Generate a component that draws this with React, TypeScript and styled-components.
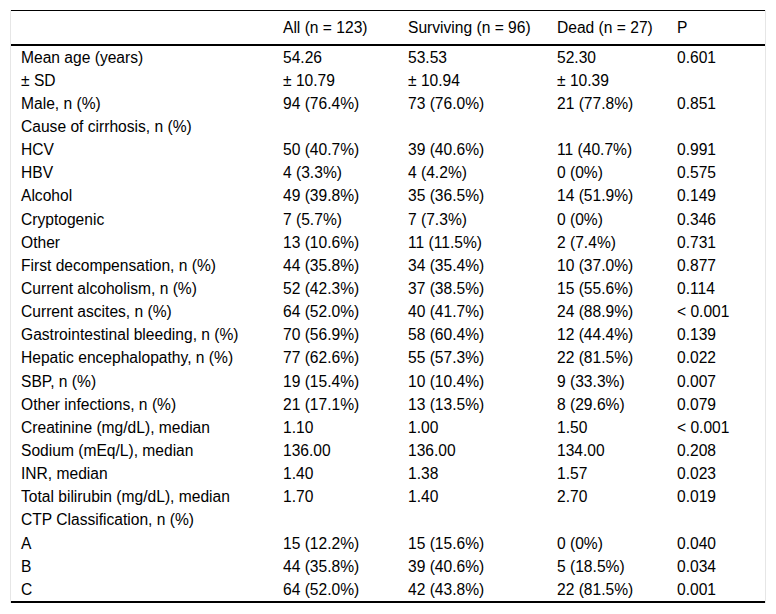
import { FC } from "react";
import styled, { createGlobalStyle } from "styled-components";

const GlobalStyle = createGlobalStyle`
  html, body {
    margin: 0;
    padding: 0;
    background: #ffffff;
  }
  body {
    font-family: "Liberation Sans", Arial, sans-serif;
    color: #000000;
  }
`;

const Page = styled.div`
  padding: 10px;
`;

const Frame = styled.div`
  width: 754px;
  border-left: 1px solid #e6e6e6;
  border-right: 1px solid #e6e6e6;
`;

const Table = styled.table`
  width: 100%;
  border-collapse: collapse;
  table-layout: fixed;
  font-size: 15.6px;
  line-height: 18px;
  border-top: 1px solid #000000;
  border-bottom: 2px solid #000000;
`;

const HeadRow = styled.tr`
  border-bottom: 2px solid #000000;
`;

const HeadCell = styled.th`
  font-weight: normal;
  text-align: left;
  height: 32px;
  padding: 1px 0 0 10px;
  vertical-align: middle;
`;

const Cell = styled.td`
  height: 23.15px;
  padding: 0 0 0 10px;
  vertical-align: middle;
  white-space: nowrap;
`;

type Row = [string, string, string, string, string];

const rows: Row[] = [
  ["Mean age (years)", "54.26", "53.53", "52.30", "0.601"],
  ["± SD", "± 10.79", "± 10.94", "± 10.39", ""],
  ["Male, n (%)", "94 (76.4%)", "73 (76.0%)", "21 (77.8%)", "0.851"],
  ["Cause of cirrhosis, n (%)", "", "", "", ""],
  ["HCV", "50 (40.7%)", "39 (40.6%)", "11 (40.7%)", "0.991"],
  ["HBV", "4 (3.3%)", "4 (4.2%)", "0 (0%)", "0.575"],
  ["Alcohol", "49 (39.8%)", "35 (36.5%)", "14 (51.9%)", "0.149"],
  ["Cryptogenic", "7 (5.7%)", "7 (7.3%)", "0 (0%)", "0.346"],
  ["Other", "13 (10.6%)", "11 (11.5%)", "2 (7.4%)", "0.731"],
  ["First decompensation, n (%)", "44 (35.8%)", "34 (35.4%)", "10 (37.0%)", "0.877"],
  ["Current alcoholism, n (%)", "52 (42.3%)", "37 (38.5%)", "15 (55.6%)", "0.114"],
  ["Current ascites, n (%)", "64 (52.0%)", "40 (41.7%)", "24 (88.9%)", "< 0.001"],
  ["Gastrointestinal bleeding, n (%)", "70 (56.9%)", "58 (60.4%)", "12 (44.4%)", "0.139"],
  ["Hepatic encephalopathy, n (%)", "77 (62.6%)", "55 (57.3%)", "22 (81.5%)", "0.022"],
  ["SBP, n (%)", "19 (15.4%)", "10 (10.4%)", "9 (33.3%)", "0.007"],
  ["Other infections, n (%)", "21 (17.1%)", "13 (13.5%)", "8 (29.6%)", "0.079"],
  ["Creatinine (mg/dL), median", "1.10", "1.00", "1.50", "< 0.001"],
  ["Sodium (mEq/L), median", "136.00", "136.00", "134.00", "0.208"],
  ["INR, median", "1.40", "1.38", "1.57", "0.023"],
  ["Total bilirubin (mg/dL), median", "1.70", "1.40", "2.70", "0.019"],
  ["CTP Classification, n (%)", "", "", "", ""],
  ["A", "15 (12.2%)", "15 (15.6%)", "0 (0%)", "0.040"],
  ["B", "44 (35.8%)", "39 (40.6%)", "5 (18.5%)", "0.034"],
  ["C", "64 (52.0%)", "42 (43.8%)", "22 (81.5%)", "0.001"],
];

const headers = ["", "All (n = 123)", "Surviving (n = 96)", "Dead (n = 27)", "P"];
const widths = [262, 125, 149, 120, 98];

const App: FC = () => {
  return (
    <>
      <GlobalStyle />
      <Page>
        <Frame>
          <Table>
            <colgroup>
              {widths.map((w, i) => (
                <col key={i} style={{ width: w }} />
              ))}
            </colgroup>
            <thead>
              <HeadRow>
                {headers.map((h, i) => (
                  <HeadCell key={i}>{h}</HeadCell>
                ))}
              </HeadRow>
            </thead>
            <tbody>
              {rows.map((r, i) => (
                <tr key={i}>
                  {r.map((c, j) => (
                    <Cell key={j}>{c}</Cell>
                  ))}
                </tr>
              ))}
            </tbody>
          </Table>
        </Frame>
      </Page>
    </>
  );
};

export default App;
